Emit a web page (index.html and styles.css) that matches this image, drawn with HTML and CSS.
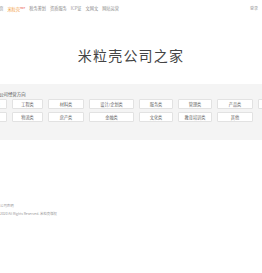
FILE: index.html
```html
<!DOCTYPE html>
<html lang="zh-CN">
<head>
<meta charset="utf-8">
<title>米粒壳公司之家</title>
<link rel="stylesheet" href="styles.css">
</head>
<body>
<div class="frame">
  <div class="page">
    <header class="topbar">
      <nav class="nav">
        <a class="nav-item">首页</a>
        <a class="nav-item hot">米粒壳<sup>HOT</sup></a>
        <a class="nav-item">税务筹划</a>
        <a class="nav-item">资质服务</a>
        <a class="nav-item">ICP证</a>
        <a class="nav-item">文网文</a>
        <a class="nav-item">网站运营</a>
      </nav>
      <a class="login">登录</a>
    </header>
    <section class="hero">
      <h1 class="title">米粒壳公司之家</h1>
    </section>
    <section class="picker">
      <div class="picker-label">请选择公司经营方向</div>
      <div class="grid">
        <a class="btn">互联网类</a>
        <a class="btn">工程类</a>
        <a class="btn">材料类</a>
        <a class="btn">设计/企划类</a>
        <a class="btn">服务类</a>
        <a class="btn">管理类</a>
        <a class="btn">产品类</a>
        <a class="btn">贸易类</a>
        <a class="btn">科技类</a>
        <a class="btn">物流类</a>
        <a class="btn">房产类</a>
        <a class="btn">金融类</a>
        <a class="btn">文化类</a>
        <a class="btn">教育培训类</a>
        <a class="btn">其他</a>
      </div>
    </section>
    <footer class="footer">
      <div class="foot-line">公司声明</div>
      <div class="foot-line">2020 All Rights Reserved. 米粒壳版权</div>
    </footer>
  </div>
</div>
</body>
</html>
```
FILE: styles.css
```css
html, body {
  margin: 0;
  padding: 0;
  background: #ffffff;
  overflow: hidden;
}
body {
  font-family: "Noto Sans CJK SC", "Noto Sans", sans-serif;
  color: #555;
}
.frame {
  display: flex;
  justify-content: center;
  width: 100%;
}
.page {
  width: 310px;
  flex-shrink: 0;
}
.topbar {
  display: flex;
  align-items: center;
  justify-content: space-between;
  height: 16px;
  padding: 0 28px 0 19px;
}
.nav {
  display: flex;
  align-items: center;
  gap: 4px;
}
.nav-item {
  font-size: 4.2px;
  color: #8a8a8a;
  line-height: 6px;
  white-space: nowrap;
}
.nav-item.hot {
  color: #f29a38;
}
.nav-item sup {
  font-size: 2.6px;
  color: #e8452c;
  vertical-align: 1.5px;
}
.login {
  font-size: 4px;
  color: #999;
}
.hero {
  height: 68px;
  box-sizing: border-box;
  padding-top: 31px;
  text-align: center;
}
.title {
  margin: 0;
  font-weight: 400;
  font-size: 14px;
  line-height: 16px;
  letter-spacing: 1.2px;
  color: #444;
}
.picker {
  background: #f4f4f4;
  padding: 7px 0 18px 10px;
}
.picker-label {
  font-size: 4.4px;
  color: #555;
  line-height: 6px;
  margin-bottom: 2px;
  white-space: nowrap;
}
.grid {
  display: grid;
  grid-template-columns: 31px 31px 36px 45px 34px 34px 36px 32px;
  width: max-content;
  column-gap: 5px;
  row-gap: 3px;
  margin-left: -10px;
}
.btn {
  display: flex;
  align-items: center;
  justify-content: center;
  height: 10px;
  background: #fff;
  border: 0.5px solid #e2e2e2;
  border-radius: 1px;
  font-size: 4.2px;
  color: #666;
  box-sizing: border-box;
  white-space: nowrap;
}
.footer {
  padding: 62px 0 0 24px;
}
.foot-line {
  font-size: 3.4px;
  color: #999;
  line-height: 8px;
  white-space: nowrap;
}
```
